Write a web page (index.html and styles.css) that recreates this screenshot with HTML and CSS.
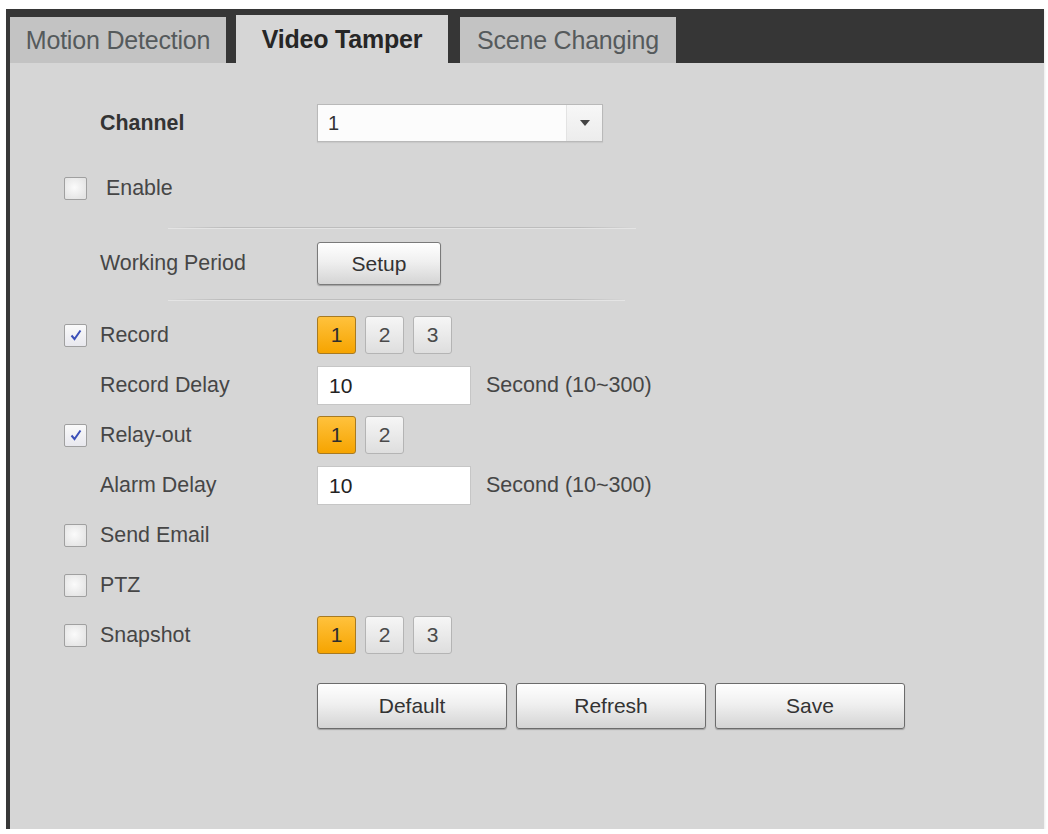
FILE: index.html
```html
<!DOCTYPE html>
<html>
<head>
<meta charset="utf-8">
<link rel="stylesheet" href="styles.css">
</head>
<body>
<div class="frame">
  <div class="tabbar">
    <div class="tab">Motion Detection</div>
    <div class="tab active">Video Tamper</div>
    <div class="tab">Scene Changing</div>
  </div>
  <div class="content">
    <div class="row row-channel">
      <span class="label bold">Channel</span>
      <div class="select"><span class="select-value">1</span><span class="select-arrow"><svg width="10" height="6" viewBox="0 0 10 6"><path d="M0 0H10L5 6Z" fill="#444"/></svg></span></div>
    </div>
    <div class="row row-enable">
      <span class="checkbox"></span>
      <span class="label label-enable">Enable</span>
    </div>
    <div class="sep sep1"></div>
    <div class="row row-period">
      <span class="label">Working Period</span>
      <button class="btn btn-setup">Setup</button>
    </div>
    <div class="sep sep2"></div>
    <div class="row">
      <span class="checkbox checked"><svg width="14" height="14" viewBox="0 0 14 14"><path d="M2.5 7.5L5.5 11L11.5 2.5" fill="none" stroke="#3b4fb8" stroke-width="2"/></svg></span>
      <span class="label label-cb">Record</span>
      <div class="nums"><span class="num on">1</span><span class="num">2</span><span class="num">3</span></div>
    </div>
    <div class="row">
      <span class="label">Record Delay</span>
      <span class="input">10</span>
      <span class="unit">Second (10~300)</span>
    </div>
    <div class="row">
      <span class="checkbox checked"><svg width="14" height="14" viewBox="0 0 14 14"><path d="M2.5 7.5L5.5 11L11.5 2.5" fill="none" stroke="#3b4fb8" stroke-width="2"/></svg></span>
      <span class="label label-cb">Relay-out</span>
      <div class="nums"><span class="num on">1</span><span class="num">2</span></div>
    </div>
    <div class="row">
      <span class="label">Alarm Delay</span>
      <span class="input">10</span>
      <span class="unit">Second (10~300)</span>
    </div>
    <div class="row">
      <span class="checkbox"></span>
      <span class="label label-cb">Send Email</span>
    </div>
    <div class="row">
      <span class="checkbox"></span>
      <span class="label label-cb">PTZ</span>
    </div>
    <div class="row">
      <span class="checkbox"></span>
      <span class="label label-cb">Snapshot</span>
      <div class="nums"><span class="num on">1</span><span class="num">2</span><span class="num">3</span></div>
    </div>
    <div class="actions">
      <button class="btn btn-action">Default</button>
      <button class="btn btn-action">Refresh</button>
      <button class="btn btn-action">Save</button>
    </div>
  </div>
</div>
</body>
</html>
```
FILE: styles.css
```css
html, body {
  margin: 0;
  padding: 0;
  background: #ffffff;
}
body {
  font-family: "Liberation Sans", Arial, sans-serif;
  color: #404040;
}
.frame {
  margin: 9px 0 0 6px;
  width: 1034px;
  height: 820px;
  border-left: 4px solid #383838;
  background: #d6d6d6;
  box-shadow: 1px 1px 2px rgba(0,0,0,0.08);
}
.tabbar {
  height: 54px;
  background: #363636;
  display: flex;
  align-items: flex-end;
}
.tab {
  width: 216px;
  height: 46px;
  line-height: 46px;
  text-align: center;
  font-size: 25px;
  color: #555a5c;
  background: #c3c3c3;
  margin-right: 10px;
  letter-spacing: -0.2px;
}
.tab.active {
  width: 212px;
  height: 48px;
  line-height: 48px;
  font-weight: bold;
  color: #262626;
  background: #d6d6d6;
  margin-right: 12px;
}
.content {
  padding-top: 41px;
}
.row {
  display: flex;
  align-items: center;
  height: 50px;
  padding-left: 90px;
}
.row:has(.checkbox) {
  padding-left: 54px;
}
.row-channel {
  height: 38px;
}
.row-enable {
  margin-top: 27px;
  height: 38px;
}
.row-period {
  margin-top: 13px;
  height: 43px;
}
.label {
  width: 217px;
  font-size: 21.4px;
  color: #464646;
}
.label.bold {
  font-weight: bold;
  color: #333;
}
.label-cb {
  margin-left: 13px;
}
.label-enable {
  margin-left: 19px;
}
.checkbox {
  box-sizing: border-box;
  width: 23px;
  height: 23px;
  border: 1px solid #a0a0a0;
  border-radius: 2px;
  background: radial-gradient(circle at 45% 45%, #fbfbfb, #e4e4e4 80%);
  display: flex;
  align-items: center;
  justify-content: center;
  flex: none;
}
.checkbox.checked {
  background: linear-gradient(#fafafa, #e8e8ee);
}
.select {
  box-sizing: border-box;
  width: 286px;
  height: 38px;
  border: 1px solid #b9b9b9;
  background: #fcfcfc;
  display: flex;
  align-items: stretch;
  box-shadow: 0 1px 1px rgba(0,0,0,0.06);
}
.select-value {
  flex: 1;
  padding-left: 10px;
  font-size: 20px;
  line-height: 36px;
  color: #333;
}
.select-arrow {
  width: 35px;
  border-left: 1px solid #e3e3e3;
  background: linear-gradient(#f7f7f7, #ececec);
  display: flex;
  align-items: center;
  justify-content: center;
}
.sep {
  height: 1px;
  margin-left: 158px;
  background: linear-gradient(to right, rgba(190,190,190,0), #bdbdbd 12%, #bdbdbd 88%, rgba(190,190,190,0));
  border-bottom: 1px solid #e4e4e4;
}
.sep1 {
  width: 468px;
  margin-top: 20px;
}
.sep2 {
  width: 457px;
  margin-top: 14px;
  margin-bottom: 9px;
}
.btn {
  box-sizing: border-box;
  font-family: "Liberation Sans", Arial, sans-serif;
  font-size: 21px;
  color: #333;
  border: 1px solid #7a7a7a;
  border-radius: 3px;
  background: linear-gradient(#ffffff, #f0f0f0 45%, #d4d4d4);
  box-shadow: 0 1px 1px rgba(0,0,0,0.25);
  padding: 0;
  cursor: pointer;
}
.btn-setup {
  width: 124px;
  height: 43px;
}
.nums {
  display: flex;
  gap: 9px;
}
.num {
  box-sizing: border-box;
  width: 39px;
  height: 38px;
  border: 1px solid #b4b4b4;
  border-radius: 3px;
  background: linear-gradient(#f6f6f6, #dedede);
  font-size: 21px;
  color: #4a4a4a;
  display: flex;
  align-items: center;
  justify-content: center;
}
.num.on {
  border-color: #a77a22;
  background: linear-gradient(#ffc23d, #f6a400);
  color: #2e2e2e;
}
.input {
  box-sizing: border-box;
  width: 154px;
  height: 39px;
  border: 1px solid #c6c6c6;
  background: #ffffff;
  font-size: 21px;
  line-height: 37px;
  padding-left: 11px;
  color: #222;
}
.unit {
  margin-left: 15px;
  font-size: 21.5px;
  color: #464646;
}
.actions {
  display: flex;
  gap: 9px;
  margin-top: 23px;
  padding-left: 307px;
}
.btn-action {
  width: 190px;
  height: 46px;
  border-color: #6c6c6c;
}
```
